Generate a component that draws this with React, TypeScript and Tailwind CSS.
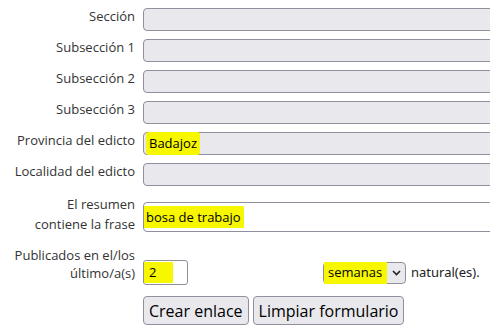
const font = { fontFamily: '"Open Sans", "Noto Sans", sans-serif' }

function Label({ children, className = '' }: { children: React.ReactNode; className?: string }) {
  return (
    <div className={`w-[135px] shrink-0 text-right text-[13px] text-[#333] ${className}`}>{children}</div>
  )
}

function Field({ value }: { value?: string }) {
  return (
    <div className="flex h-[23px] w-[360px] shrink-0 items-center rounded-[4px] border border-[#8f8f9d] bg-[#e9e9ed] pl-[2px] text-[13px] text-black">
      {value && <span className="rounded-[3px] bg-[#f7f700] px-[3px] pt-[2px] pb-[1px]">{value}</span>}
    </div>
  )
}

const rows = ['Sección', 'Subsección 1', 'Subsección 2', 'Subsección 3']

export default function App() {
  return (
    <div className="h-[333px] w-[490px] overflow-hidden bg-white pt-2" style={font}>
      <div className="flex flex-col gap-2">
        {rows.map((r) => (
          <div key={r} className="flex items-center gap-2">
            <Label className="mb-[6px] leading-[17px]">{r}</Label>
            <Field />
          </div>
        ))}
        <div className="flex items-center gap-2">
          <Label className="mb-[6px] leading-[17px]">Provincia del edicto</Label>
          <Field value="Badajoz" />
        </div>
        <div className="flex items-center gap-2">
          <Label className="mb-[6px] leading-[17px]">Localidad del edicto</Label>
          <Field />
        </div>
      </div>

      <div className="mt-2 flex items-center gap-2">
        <Label className="mb-[6px] leading-[20px]">
          El resumen
          <br />
          contiene la frase
        </Label>
        <div className="flex h-[30px] w-[360px] shrink-0 items-center rounded-[4px] border border-[#8f8f9d] bg-white text-[13px] text-black">
          <span className="bg-[#f7f700] pl-[2px] pr-[3px] pt-[2px] pb-[1px]">bosa de trabajo</span>
        </div>
      </div>

      <div className="mt-[6px] flex items-end gap-2">
        <Label className="mb-[3px] leading-[18px]">
          Publicados en el/los
          <br />
          último/a(s)
        </Label>
        <div className="flex h-[25px] w-[45px] shrink-0 items-center rounded-[3px] border border-[#8f8f9d] bg-white text-[13px] text-black">
          <span className="bg-[#f7f700] py-[1px] pl-[5px] pr-[17px]">2</span>
        </div>
        <div className="mb-[1px] ml-[127px] flex items-center">
          <div className="flex h-[22px] w-[83px] items-center rounded-[4px] border border-[#8f8f9d] bg-[#e9e9ed] text-[13px] text-black">
            <span className="bg-[#f7f700] py-[1px] pl-[4px] pr-[5px]">semanas</span>
            <svg className="ml-auto mr-[4px]" width="9" height="6" viewBox="0 0 9 6" fill="none">
              <path d="M1 1 L4.5 4.5 L8 1" stroke="#222" strokeWidth="1.6" />
            </svg>
          </div>
          <span className="ml-[5px] text-[13px] text-[#222]" style={{ fontFamily: '"Noto Sans", sans-serif' }}>
            natural(es).
          </span>
        </div>
      </div>

      <div className="mt-[11px] flex gap-2">
        <div className="w-[135px] shrink-0" />
        <div className="flex gap-1">
          <button className="h-[29px] rounded-[4px] border border-[#8f8f9d] bg-[#e9e9ed] px-[5px] text-[16px] text-black">
            Crear enlace
          </button>
          <button className="h-[29px] rounded-[4px] border border-[#8f8f9d] bg-[#e9e9ed] px-[5px] text-[16px] text-black">
            Limpiar formulario
          </button>
        </div>
      </div>
    </div>
  )
}
